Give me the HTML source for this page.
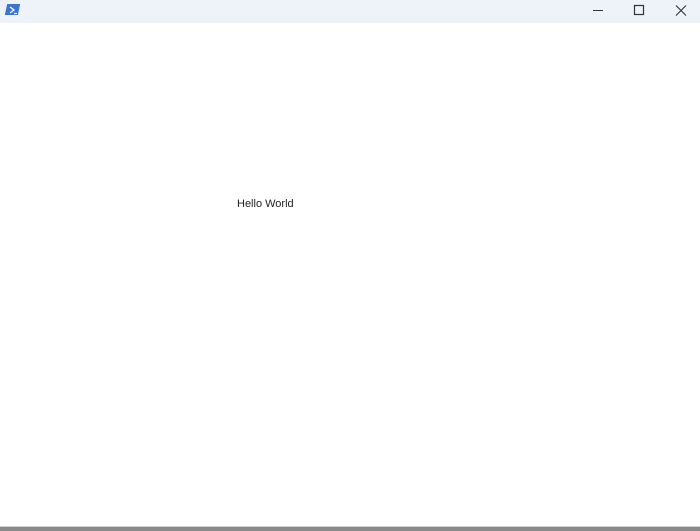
<!DOCTYPE html>
<html><head><style>
html,body{margin:0;padding:0;width:700px;height:530px;overflow:hidden;background:#fff;font-family:"Liberation Sans",sans-serif;}
.tb{position:absolute;left:0;top:0;width:700px;height:23px;background:#eef2f9;}
.icon{position:absolute;left:6px;top:4px;width:13px;height:11px;background:#3b73d1;transform:skewX(-12deg);}
.txt{position:absolute;left:237px;top:198px;font-size:11px;color:#222;}
.bot{position:absolute;left:0;top:526px;width:700px;height:4px;background:#8a8a8a;border-top:1px solid #d0d0d0;}
</style></head><body>
<div class="tb">
<div class="icon"></div>
<svg style="position:absolute;left:6px;top:4px" width="14" height="12"><path d="M4 3 L8 6 L4 9" stroke="#fff" stroke-width="1.3" fill="none"/><path d="M8 9.5 H11" stroke="#fff" stroke-width="1.2"/></svg>
<svg style="position:absolute;left:590px;top:4px" width="100" height="14">
<path d="M3 6.5 H13" stroke="#333" stroke-width="1"/>
<rect x="44.5" y="1.5" width="9" height="9" stroke="#333" fill="none" stroke-width="1.2"/>
<path d="M86 1.5 L96 11.5 M96 1.5 L86 11.5" stroke="#333" stroke-width="1.1"/>
</svg>
</div>
<div class="txt">Hello World</div>
<div class="bot"></div>
</body></html>
